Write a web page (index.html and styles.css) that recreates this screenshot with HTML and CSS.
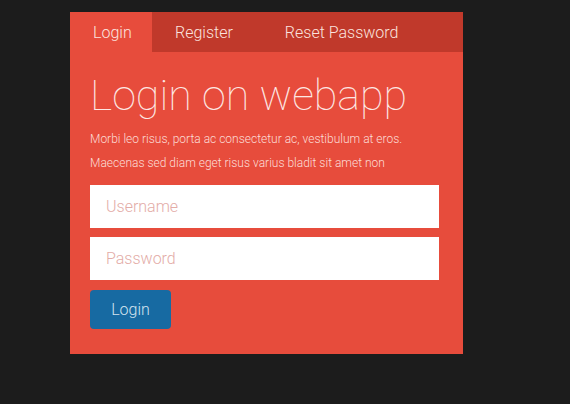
FILE: index.html
```html
<!DOCTYPE html>
<html>
<head>
<meta charset="utf-8">
<link rel="stylesheet" href="styles.css">
</head>
<body>
<div class="panel">
  <nav class="tabs">
    <a class="tab active">Login</a>
    <a class="tab">Register</a>
    <a class="tab">Reset Password</a>
  </nav>
  <div class="content">
    <h1 class="title">Login on webapp</h1>
    <p class="text">Morbi leo risus, porta ac consectetur ac, vestibulum at eros.</p>
    <p class="text">Maecenas sed diam eget risus varius bladit sit amet non</p>
    <form class="form">
      <input class="field" type="text" placeholder="Username">
      <input class="field" type="password" placeholder="Password">
      <button class="btn" type="button">Login</button>
    </form>
  </div>
</div>
</body>
</html>
```
FILE: styles.css
```css
html, body {
  margin: 0;
  padding: 0;
  background: #1c1c1c;
  height: 100%;
}
body {
  padding: 12px 0 0 70px;
  box-sizing: border-box;
  font-family: Roboto, "Liberation Sans", sans-serif;
}
.panel {
  width: 393px;
  height: 342px;
  background: #e74c3c;
  display: flex;
  flex-direction: column;
}
.tabs {
  display: flex;
  flex-shrink: 0;
  height: 40px;
  background: #c0392b;
}
.tab {
  display: flex;
  align-items: center;
  color: #fbe3df;
  font-size: 16px;
  font-weight: 300;
  padding: 0 22px 0 23px;
}
.tab.active {
  background: #e74c3c;
  width: 82px;
  box-sizing: border-box;
}
.tab:nth-child(2) {
  padding-left: 23px;
  padding-right: 52px;
}
.tab:nth-child(3) {
  padding-left: 0;
}
.content {
  padding: 0 25px 0 20px;
}
.title {
  margin: 17px 0 6px 0;
  font-size: 43px;
  font-weight: 100;
  color: #fde8e4;
  line-height: 52px;
  white-space: nowrap;
}
.text {
  margin: 0;
  font-size: 12px;
  font-weight: 300;
  color: #fcdcd6;
  line-height: 24px;
}
.form {
  margin-top: 10px;
  display: flex;
  flex-direction: column;
  align-items: flex-start;
  gap: 9px;
}
.field {
  width: 349px;
  height: 43px;
  box-sizing: border-box;
  border: none;
  background: #fff;
  padding: 0 16px;
  font-family: Roboto, "Liberation Sans", sans-serif;
  font-size: 16px;
  font-weight: 300;
  outline: none;
}
.field::placeholder {
  color: #e3aca7;
}
.btn {
  margin-top: 1px;
  width: 81px;
  height: 39px;
  border: none;
  border-radius: 4px;
  background: #176aa2;
  color: #d3e3ef;
  font-family: Roboto, "Liberation Sans", sans-serif;
  font-size: 16px;
  font-weight: 300;
}
```
